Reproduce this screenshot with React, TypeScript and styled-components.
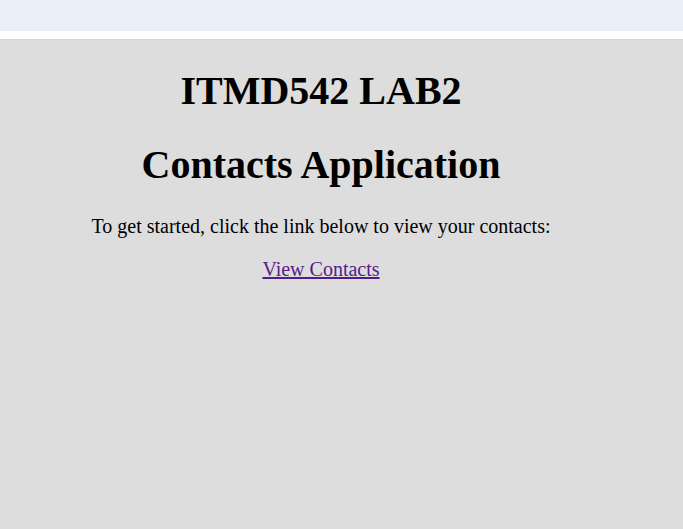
import React from "react";
import styled, { createGlobalStyle } from "styled-components";

const Global = createGlobalStyle`
  html, body { margin: 0; padding: 0; height: 100%; }
  body { font-family: "Liberation Serif", "Times New Roman", serif; background: #ffffff; color: #000; }
  #root { min-height: 100%; display: flex; flex-direction: column; }
`;

const TopBar = styled.div`
  height: 31px;
  background: #eaeef6;
  flex-shrink: 0;
`;

const Main = styled.main`
  margin-top: 8px;
  flex: 1;
  background: #dddddd;
  border-top: 1px solid #d6d6d6;
  padding: 0 41px 0 0;
  min-height: 490px;
`;

const Content = styled.div`
  text-align: center;
`;

const Title = styled.h1`
  font-size: 40px;
  font-weight: bold;
  margin: 27px 0;
  line-height: normal;
`;

const Text = styled.p`
  font-size: 20px;
  margin: 20px 0;
`;

const Link = styled.a`
  color: #551a8b;
  text-decoration: underline;
`;

export default function App() {
  return (
    <>
      <Global />
      <TopBar />
      <Main>
        <Content>
          <Title>ITMD542 LAB2</Title>
          <Title>Contacts Application</Title>
          <Text>To get started, click the link below to view your contacts:</Text>
          <Text>
            <Link href="#">View Contacts</Link>
          </Text>
        </Content>
      </Main>
    </>
  );
}
